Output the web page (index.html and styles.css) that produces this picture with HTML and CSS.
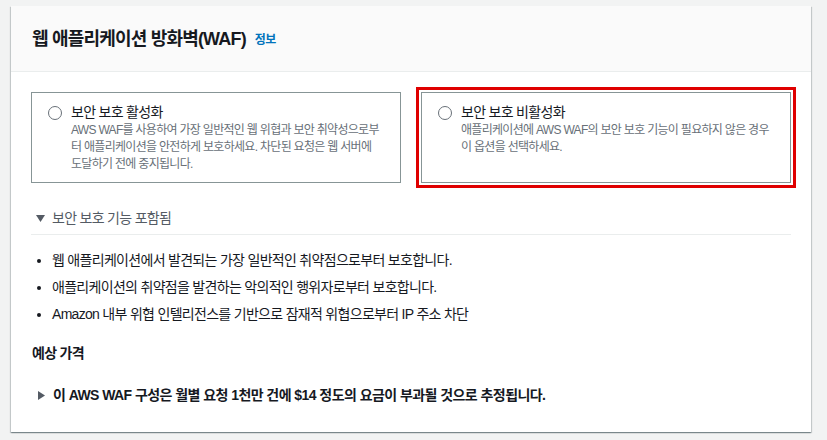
FILE: index.html
```html
<!DOCTYPE html>
<html lang="ko">
<head>
  <meta charset="UTF-8" />
  <title>웹 애플리케이션 방화벽(WAF)</title>
  <link rel="stylesheet" href="styles.css">
</head>
<body>
  <div class="container">
    <div class="container-header">
      <h2>웹 애플리케이션 방화벽(WAF)</h2>
      <a class="info-link" href="#">정보</a>
    </div>
    <div class="container-body">
      <div class="tiles">
        <label class="tile">
          <span class="radio"></span>
          <span class="tile-text">
            <span class="tile-label">보안 보호 활성화</span>
            <span class="tile-desc">AWS WAF를 사용하여 가장 일반적인 웹 위협과 보안 취약성으로부터 애플리케이션을 안전하게 보호하세요. 차단된 요청은 웹 서버에 도달하기 전에 중지됩니다.</span>
          </span>
        </label>
        <label class="tile tile-focused">
          <span class="radio"></span>
          <span class="tile-text">
            <span class="tile-label">보안 보호 비활성화</span>
            <span class="tile-desc">애플리케이션에 AWS WAF의 보안 보호 기능이 필요하지 않은 경우 이 옵션을 선택하세요.</span>
          </span>
        </label>
      </div>

      <div class="expander">
        <div class="expander-header">
          <svg class="caret" width="9" height="7" viewBox="0 0 9 7"><path d="M0 0h9L4.5 7z" fill="#545b64"/></svg>
          <span>보안 보호 기능 포함됨</span>
        </div>
        <ul class="features">
          <li>웹 애플리케이션에서 발견되는 가장 일반적인 취약점으로부터 보호합니다.</li>
          <li>애플리케이션의 취약점을 발견하는 악의적인 행위자로부터 보호합니다.</li>
          <li>Amazon 내부 위협 인텔리전스를 기반으로 잠재적 위협으로부터 IP 주소 차단</li>
        </ul>
      </div>

      <h3 class="price-title">예상 가격</h3>
      <div class="price-line">
        <svg class="caret-right" width="7" height="9" viewBox="0 0 7 9"><path d="M0 0l7 4.5L0 9z" fill="#545b64"/></svg>
        <span>이 AWS WAF 구성은 월별 요청 1천만 건에 $14 정도의 요금이 부과될 것으로 추정됩니다.</span>
      </div>
    </div>
  </div>
</body>
</html>
```

FILE: styles.css
```css
body {
  margin: 0;
  padding: 6px 16px 7px 11px;
  background: #f2f3f3;
  color: #16191f;
  font-family: "Liberation Sans", "Noto Sans CJK KR", sans-serif;
  font-size: 14px;
  line-height: 20px;
  letter-spacing: -0.05em;
}

.container {
  background: #fff;
  box-shadow: 0 1px 1px 0 rgba(0, 28, 36, 0.3), 1px 1px 1px 0 rgba(0, 28, 36, 0.15), -1px 1px 1px 0 rgba(0, 28, 36, 0.15);
}

.container-header {
  display: flex;
  align-items: center;
  gap: 9px;
  padding: 21px 21px 20px;
  background: #fafafa;
  border-bottom: 1px solid #eaeded;
}

.container-header h2 {
  margin: 0;
  font-size: 18px;
  line-height: 24px;
  font-weight: bold;
  letter-spacing: -0.045em;
}

.info-link {
  color: #0073bb;
  font-size: 12px;
  font-weight: bold;
  text-decoration: none;
  padding-top: 2px;
}

.container-body {
  padding: 20px 20px 27px;
}

.tiles {
  display: grid;
  grid-template-columns: 1fr 1fr;
  gap: 20px;
}

.tile {
  display: flex;
  gap: 9px;
  padding: 9px 16px 9px;
  border: 1px solid #879596;
}

.tile-focused {
  outline: 3px solid #df0000;
  outline-offset: 2px;
}

.radio {
  flex: none;
  width: 12px;
  height: 12px;
  margin-top: 4px;
  border: 1px solid #687078;
  border-radius: 50%;
}

.tile-text {
  display: flex;
  flex-direction: column;
}

.tile-label {
  font-size: 14px;
  line-height: 20px;
}

.tile-desc {
  font-size: 12px;
  line-height: 17px;
  color: #687078;
}

.expander {
  margin-top: 25px;
}

.expander-header {
  display: flex;
  align-items: center;
  gap: 7px;
  padding: 0 0 6px 5px;
  border-bottom: 1px solid #eaeded;
  color: #545b64;
}

.features {
  margin: 15px 0 0;
  padding-left: 21px;
}

.features li {
  margin-top: 7px;
}

.features li:first-child {
  margin-top: 0;
}

.price-title {
  margin: 19px 0 0 1px;
  font-size: 14px;
  line-height: 20px;
  font-weight: bold;
}

.price-line {
  display: flex;
  align-items: center;
  gap: 8px;
  margin-top: 22px;
  padding-left: 7px;
  font-weight: bold;
  letter-spacing: -0.04em;
}
```
